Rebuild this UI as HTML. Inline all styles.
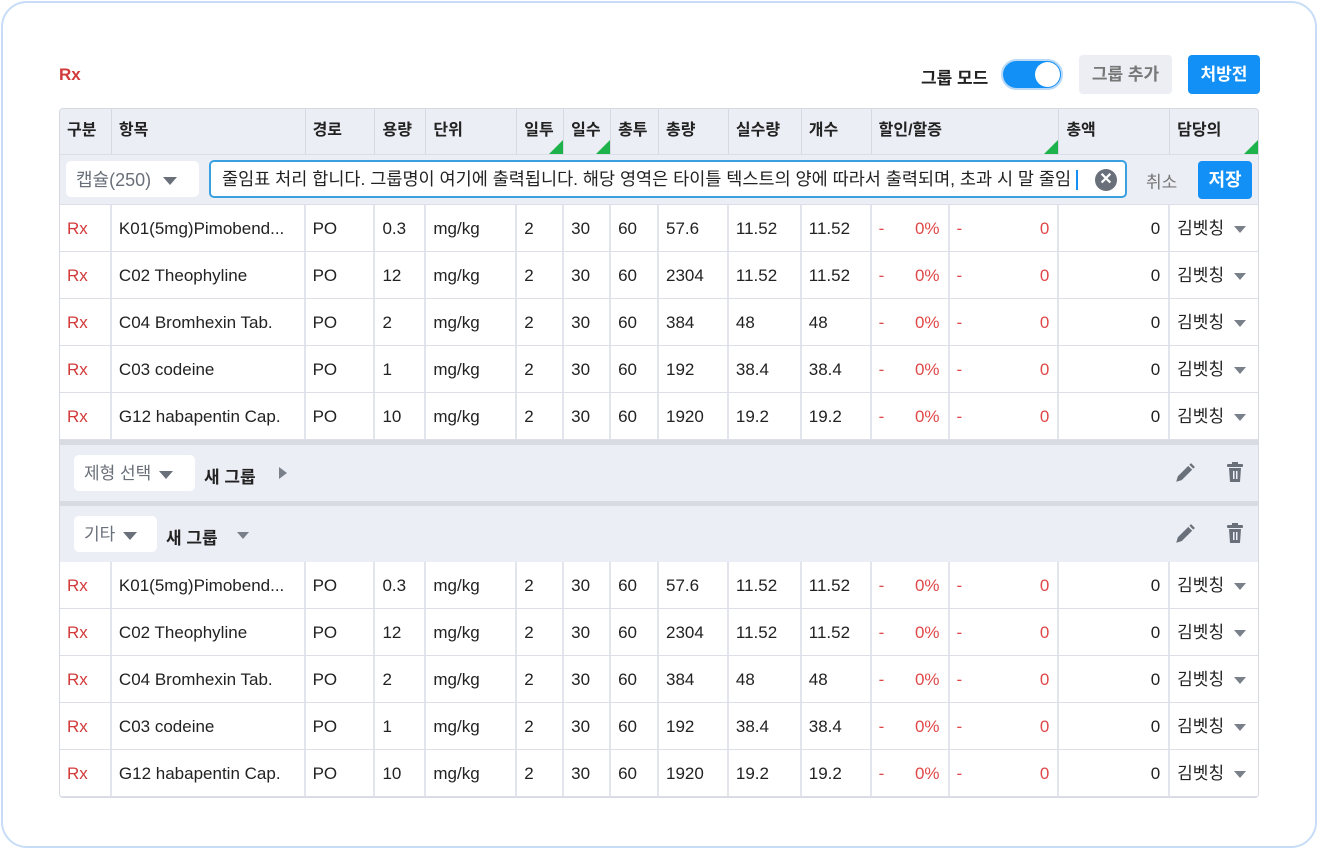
<!DOCTYPE html>
<html><head><meta charset="utf-8"><style>
*{box-sizing:border-box;margin:0;padding:0}
body{width:1318px;height:849px;background:#fff;font-family:"Liberation Sans","Noto Sans CJK KR",sans-serif;color:#222;position:relative;overflow:hidden}
.frame{position:absolute;left:1px;top:1px;width:1316px;height:847px;border:2px solid #c7ddf7;border-radius:26px}
.rx{color:#d23a3a}
.abs{position:absolute}
.tbl{position:absolute;left:59px;top:108px;width:1200px;border:1px solid #d6d9e2;border-radius:4px;overflow:hidden}
.row{display:flex;height:47px;border-bottom:1px solid #dcdfe7;background:#fff}
.row>div{border-right:2px solid #e3e5ec;padding-left:7px;font-size:17px;line-height:48px;white-space:nowrap;overflow:hidden;position:relative}
.row>div:last-child{border-right:none}
.hdr{background:#eceef5;height:46px}
.hdr>div{font-weight:bold;font-size:16px;line-height:44px;border-right:1px solid #d6d9e2}
.tri{position:absolute;right:0;bottom:0;width:0;height:0;border-left:14px solid transparent;border-bottom:14px solid #1db34a}
.r{text-align:right;padding-right:8px}
.red{color:#e04848}
.dd::after{content:"";position:absolute;right:12px;top:21px;border-left:6px solid transparent;border-right:6px solid transparent;border-top:7px solid #7a808a}
.grp{height:56px;background:#eceef5;position:relative;border-bottom:none}
.sep{height:5px;background:#d9dbe3}
.sel{position:absolute;top:10px;height:36px;background:#fff;border-radius:5px;font-size:17px;line-height:38px;color:#6a707a;padding-left:10px}
.caret{display:inline-block;border-left:7px solid transparent;border-right:7px solid transparent;border-top:8px solid #6a707a;vertical-align:middle;margin-left:8px}
</style></head><body>
<div class="frame"></div>
<div class="abs rx" style="left:59px;top:65px;font-weight:bold;font-size:17px">Rx</div>
<div class="abs" style="left:921px;top:64px;font-size:17px;font-weight:bold;color:#222">그룹 모드</div>
<div class="abs" style="left:1001px;top:59px;width:62px;height:31px;border-radius:16px;background:#1390f5;border:2px solid #b9d9f7"></div>
<div class="abs" style="left:1035px;top:62px;width:25px;height:25px;border-radius:50%;background:#fff"></div>
<div class="abs" style="left:1079px;top:55px;width:93px;height:39px;border-radius:4px;background:#eceef3;color:#777;font-size:17px;font-weight:bold;line-height:40px;text-align:center">그룹 추가</div>
<div class="abs" style="left:1188px;top:55px;width:72px;height:39px;border-radius:4px;background:#1390f5;color:#fff;font-size:17px;font-weight:bold;line-height:40px;text-align:center">처방전</div>

<div class="tbl">
<div class="row hdr">
<div style="width:52px">구분</div><div style="width:194px">항목</div><div style="width:70px">경로</div><div style="width:51px">용량</div><div style="width:91px">단위</div><div style="width:47px">일투<span class="tri"></span></div><div style="width:47px">일수<span class="tri"></span></div><div style="width:48px">총투</div><div style="width:70px">총량</div><div style="width:73px">실수량</div><div style="width:70px">개수</div><div style="width:188px">할인/할증<span class="tri"></span></div><div style="width:111px">총액</div><div style="width:88px">담당의<span class="tri"></span></div>
</div>
<div style="height:50px;background:#eceef5;position:relative;border-bottom:1px solid #dcdfe7">
<div class="sel" style="left:6px;top:6px;width:133px;font-size:18px">캡슐(250)<span class="caret" style="margin-left:12px"></span></div>
<div class="abs" style="left:149px;top:5px;width:918px;height:38px;border:2px solid #3aa0e0;border-radius:5px;background:#fff;font-size:17.5px;line-height:34px;padding-left:11px;color:#222;white-space:nowrap;overflow:hidden">줄임표 처리 합니다. 그룹명이 여기에 출력됩니다. 해당 영역은 타이틀 텍스트의 양에 따라서 출력되며, 초과 시 말 줄임 <span style="display:inline-block;width:2px;height:20px;background:#1390f5;vertical-align:middle"></span></div>
<div class="abs" style="left:1035px;top:14px;width:22px;height:22px;border-radius:50%;background:#6a707a;color:#fff;font-size:16px;line-height:22px;text-align:center;font-weight:bold">✕</div>
<div class="abs" style="left:1086px;top:13px;font-size:17px;color:#777">취소</div>
<div class="abs" style="left:1138px;top:6px;width:54px;height:38px;border-radius:4px;background:#1390f5;color:#fff;font-weight:bold;font-size:18px;line-height:38px;text-align:center">저장</div>
</div>
<div id="a"></div>
<div class="sep"></div>
<div class="grp">
<div class="sel" style="left:14px;width:121px">제형 선택<span class="caret"></span></div>
<div class="abs" style="left:144px;top:18px;font-weight:bold;font-size:17px">새 그룹</div>
<div class="abs" style="left:219px;top:22px;border-top:6px solid transparent;border-bottom:6px solid transparent;border-left:8px solid #7a808a"></div>
<svg class="abs" style="left:1114px;top:17px" width="22" height="22" viewBox="0 0 20 20"><path d="M2 18l1.5-5 9.5-9.5 3.5 3.5L7 16.5z" fill="#6a707a"/><path d="M14 2.5l1.5-1.5 3.5 3.5-1.5 1.5z" fill="#6a707a"/></svg>
<svg class="abs" style="left:1166px;top:17px" width="18" height="21" viewBox="0 0 18 21"><rect x="1" y="2" width="16" height="3" rx="1" fill="#6a707a"/><rect x="6" y="0" width="6" height="3" fill="#6a707a"/><path d="M3 6h12l-1 14H4z" fill="#6a707a"/><rect x="7" y="9" width="1.5" height="8" fill="#eceef5"/><rect x="10" y="9" width="1.5" height="8" fill="#eceef5"/></svg>
</div>
<div class="sep"></div>
<div class="grp">
<div class="sel" style="left:14px;width:83px">기타<span class="caret"></span></div>
<div class="abs" style="left:106px;top:18px;font-weight:bold;font-size:17px">새 그룹</div>
<div class="abs" style="left:177px;top:26px;border-left:6px solid transparent;border-right:6px solid transparent;border-top:7px solid #7a808a"></div>
<svg class="abs" style="left:1114px;top:17px" width="22" height="22" viewBox="0 0 20 20"><path d="M2 18l1.5-5 9.5-9.5 3.5 3.5L7 16.5z" fill="#6a707a"/><path d="M14 2.5l1.5-1.5 3.5 3.5-1.5 1.5z" fill="#6a707a"/></svg>
<svg class="abs" style="left:1166px;top:17px" width="18" height="21" viewBox="0 0 18 21"><rect x="1" y="2" width="16" height="3" rx="1" fill="#6a707a"/><rect x="6" y="0" width="6" height="3" fill="#6a707a"/><path d="M3 6h12l-1 14H4z" fill="#6a707a"/><rect x="7" y="9" width="1.5" height="8" fill="#eceef5"/><rect x="10" y="9" width="1.5" height="8" fill="#eceef5"/></svg>
</div>
<div id="b"></div>
</div>
<script>
var d=[["K01(5mg)Pimobend...","0.3","57.6","11.52","11.52"],["C02 Theophyline","12","2304","11.52","11.52"],["C04 Bromhexin Tab.","2","384","48","48"],["C03 codeine","1","192","38.4","38.4"],["G12 habapentin Cap.","10","1920","19.2","19.2"]];
var h="";d.forEach(function(r){h+='<div class="row"><div class="rx" style="width:52px">Rx</div><div style="width:194px">'+r[0]+'</div><div style="width:70px">PO</div><div style="width:51px">'+r[1]+'</div><div style="width:91px">mg/kg</div><div style="width:47px">2</div><div style="width:47px">30</div><div style="width:48px">60</div><div style="width:70px">'+r[2]+'</div><div style="width:73px">'+r[3]+'</div><div style="width:70px">'+r[4]+'</div><div class="red" style="width:78px">-<span style="position:absolute;right:8px">0%</span></div><div class="red" style="width:110px">-<span style="position:absolute;right:8px">0</span></div><div class="r" style="width:111px">0</div><div class="dd" style="width:88px">김벳칭</div></div>';});
document.getElementById("a").outerHTML=h;document.getElementById("b").outerHTML=h;
</script>
</body></html>
